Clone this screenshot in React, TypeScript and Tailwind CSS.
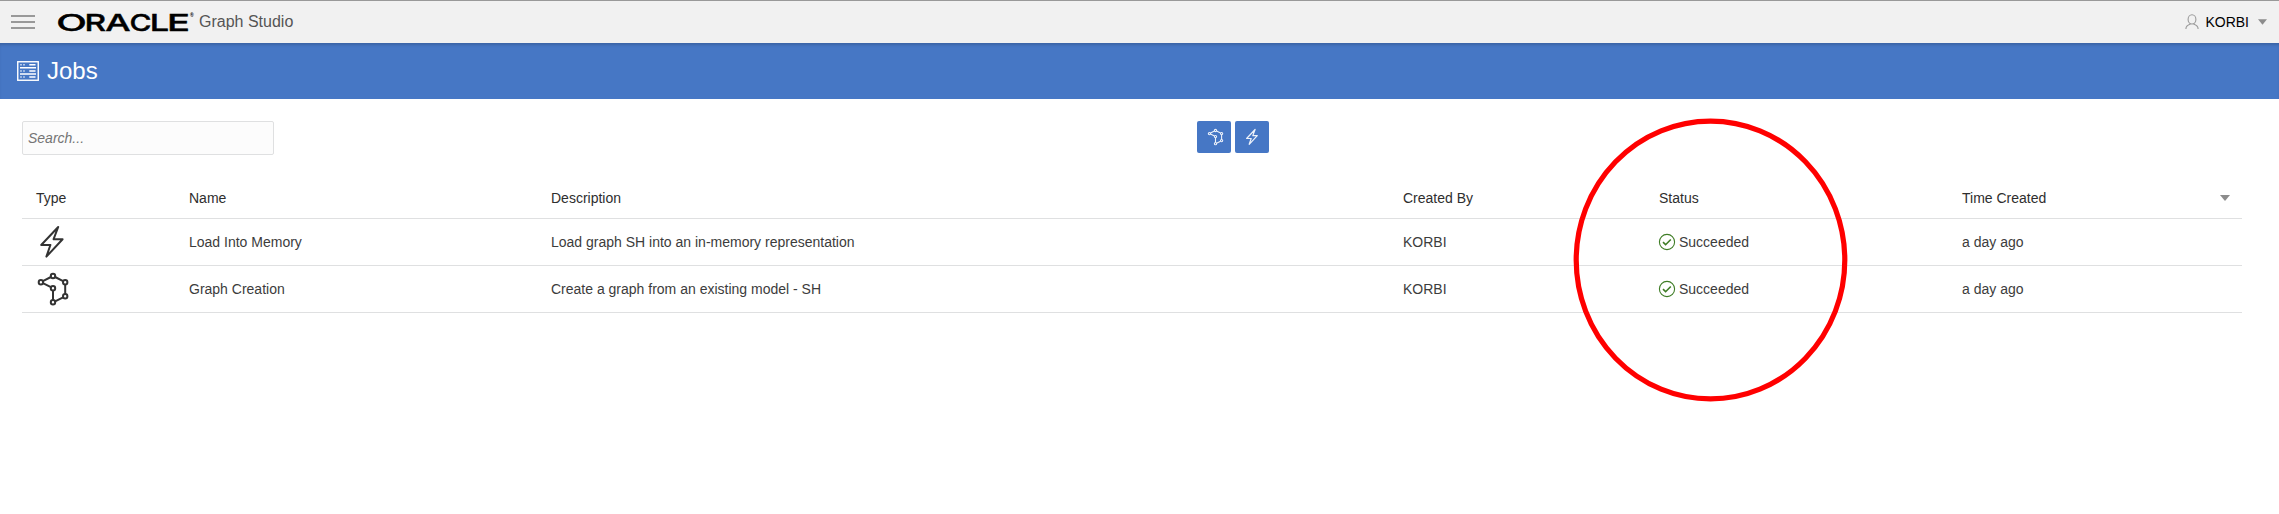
import React from "react";

function BoltIcon({ className }: { className: string }) {
  return (
    <svg viewBox="0 0 36 36" className={className} fill="none" stroke="currentColor" strokeLinejoin="round">
      <path d="M22.2 3 L17.6 15.2 H26.6 L10.4 32.6 L14.4 21 H5.2 Z" />
    </svg>
  );
}

function GraphIcon({ className }: { className: string }) {
  const nodes = [
    [4.9, 11.2],
    [17, 5],
    [29.2, 11.2],
    [29.2, 25.2],
    [17, 31.3],
    [17, 17.2],
  ];
  return (
    <svg viewBox="0 0 36 36" className={className} fill="none" stroke="currentColor">
      <path d="M6.9 10.1 L14.9 6 M19.1 6 L27.1 10.1 M29.2 13.6 V22.9 M27.1 26.3 L19.1 30.3 M17 29 V19.6 M14.9 16.1 L6.9 12.2" />
      {nodes.map(([x, y]) => (
        <circle key={`${x}-${y}`} cx={x} cy={y} r="2.2" />
      ))}
    </svg>
  );
}

function JobsIcon() {
  return (
    <svg viewBox="0 0 22 20" className="h-5 w-[22px] shrink-0 text-white" fill="none" stroke="currentColor">
      <rect x="0.75" y="0.75" width="20.5" height="18.5" strokeWidth="1.4" />
      {[3.8, 9.9, 16].map((y) => (
        <path key={y} d={`M3.4 ${y}h1.2M6.4 ${y}h1.2M12.3 ${y}h6.2`} strokeWidth="1.5" />
      ))}
      <path d="M3 6.8h16M3 12.9h16" strokeWidth="1.5" />
    </svg>
  );
}

function UserIcon() {
  return (
    <svg viewBox="0 0 14 16" className="h-4 w-[14px] text-[#999]" fill="none" stroke="currentColor" strokeWidth="1.1">
      <ellipse cx="7" cy="5.4" rx="3.9" ry="4.6" />
      <path d="M5 9.4v.9C3 11 .9 11.7.9 15M9 9.4v.9c2 .7 4.1 1.4 4.1 4.7" />
    </svg>
  );
}

function Caret({ className }: { className: string }) {
  return (
    <svg viewBox="0 0 10 6" className={className} fill="#8c8c8c">
      <path d="M0 0h10L5 6z" />
    </svg>
  );
}

function Succeeded() {
  return (
    <span className="flex items-center gap-[3px]">
      <svg viewBox="0 0 18 18" className="-ml-px size-[18px] text-[#3f7d26]" fill="none" stroke="currentColor">
        <circle cx="9" cy="9" r="7.6" strokeWidth="1.1" />
        <path d="M5 9.2l2.6 2.5 5.2-5.2" strokeWidth="1.6" />
      </svg>
      Succeeded
    </span>
  );
}

const wordmark = [
  { letter: "O", x: -0.8, width: 30.6 },
  { letter: "R", x: 27.4, width: 21.6 },
  { letter: "A", x: 48.2, width: 25.4 },
  { letter: "C", x: 72.4, width: 22 },
  { letter: "L", x: 92.8, width: 19.4 },
  { letter: "E", x: 110, width: 23 },
];

const grid =
  "grid grid-cols-[153px_362px_852px_256px_303px_1fr] items-center border-b border-[#dfe0e1] pl-[14px]";

const jobs = [
  { type: "load", name: "Load Into Memory", description: "Load graph SH into an in-memory representation" },
  { type: "create", name: "Graph Creation", description: "Create a graph from an existing model - SH" },
];

export default function App() {
  return (
    <div className="relative h-[514px] w-[2279px] overflow-hidden bg-white font-['Liberation_Sans',Arial,sans-serif] text-sm text-[#3c3c3c]">
      <header className="flex h-[43px] items-center border-t border-[#999] bg-[#f1f1f1] pr-3 pl-[11px]">
        <button aria-label="Menu" className="flex w-6 flex-col gap-1">
          <span className="h-0.5 bg-[#999]" />
          <span className="h-0.5 bg-[#999]" />
          <span className="h-0.5 bg-[#999]" />
        </button>
        <svg viewBox="0 0 138 24" className="ml-[22px] h-6 w-[138px] shrink-0 overflow-visible fill-black">
          <text y="20.6" className="stroke-black stroke-[0.4] font-[Inter,sans-serif] text-[23.5px] font-medium">
            {wordmark.map(({ letter, x, width }) => (
              <tspan key={letter} x={x} textLength={width} lengthAdjust="spacingAndGlyphs">
                {letter}
              </tspan>
            ))}
          </text>
          <text x="133" y="7" className="font-['Liberation_Sans',sans-serif] text-[5px] font-bold">
            ®
          </text>
        </svg>
        <span className="ml-1 text-base leading-[18px] text-[#555]">Graph Studio</span>
        <div className="ml-auto flex items-center text-black">
          <UserIcon />
          <span className="ml-[6px]">KORBI</span>
          <Caret className="ml-[9px] h-[6px] w-[9px]" />
        </div>
      </header>

      <div className="flex h-14 items-center gap-2 bg-[#4677c5] pl-[17px] text-2xl text-white shadow-[inset_0_3px_3px_-1px_rgba(0,0,0,0.16)]">
        <JobsIcon />
        <h1>Jobs</h1>
      </div>

      <main className="pr-[37px] pl-[22px]">
        <div className="flex items-start pt-[22px]">
          <input
            placeholder="Search..."
            className="h-[34px] w-[252px] rounded-[2px] border border-[#dfe0e1] bg-[#fcfcfc] px-[5px] italic placeholder:text-[#757575]"
          />
          <div className="ml-[923px] flex gap-1">
            <button className="flex h-8 w-[34px] items-center justify-center rounded-[2px] bg-[#4677c5] pl-[3px] text-[#edf2fa]">
              <GraphIcon className="size-[18px] stroke-[2.2]" />
            </button>
            <button className="flex h-8 w-[34px] items-center justify-center rounded-[2px] bg-[#4677c5] pl-[2px] text-[#edf2fa]">
              <BoltIcon className="size-[18px] stroke-[2.4]" />
            </button>
          </div>
        </div>

        <section className="mt-[22px]">
          <div className={`${grid} h-[42px] text-[#2e2e2e]`}>
            <span>Type</span>
            <span>Name</span>
            <span>Description</span>
            <span>Created By</span>
            <span>Status</span>
            <span className="flex items-center justify-between pr-3">
              Time Created
              <Caret className="h-[6px] w-[10px]" />
            </span>
          </div>
          {jobs.map((job) => (
            <div key={job.name} className={`${grid} h-[47px]`}>
              {job.type === "load" ? (
                <BoltIcon className="size-9 stroke-[2] text-[#333]" />
              ) : (
                <GraphIcon className="size-9 stroke-[2] text-[#333]" />
              )}
              <span>{job.name}</span>
              <span>{job.description}</span>
              <span>KORBI</span>
              <Succeeded />
              <span>a day ago</span>
            </div>
          ))}
        </section>
      </main>

      <svg viewBox="0 0 276 286" className="absolute top-[117px] left-[1573px] h-[286px] w-[276px]" fill="none">
        <ellipse cx="137.5" cy="143" rx="134.3" ry="138.9" stroke="#f00" strokeWidth="5.2" />
      </svg>
    </div>
  );
}
